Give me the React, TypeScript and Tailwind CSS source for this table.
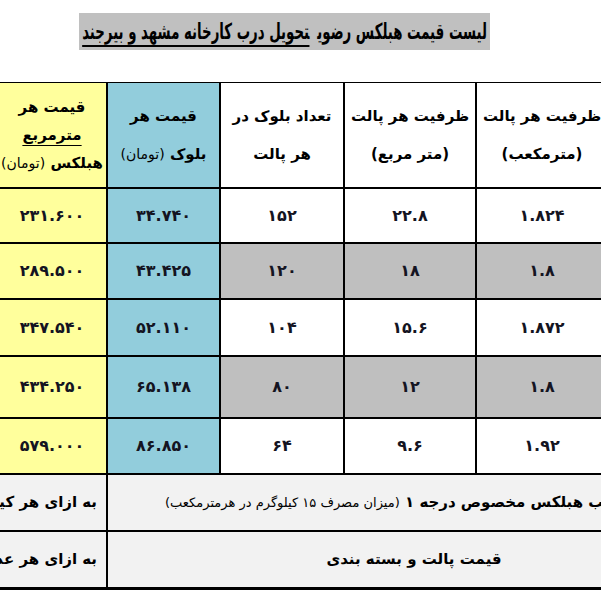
import React from "react";

const rows = [
  { a: "۲۳۱.۶۰۰", b: "۳۴.۷۴۰", c: "۱۵۲", d: "۲۲.۸", e: "۱.۸۲۴", gray: false, h: "h-[53px]" },
  { a: "۲۸۹.۵۰۰", b: "۴۳.۴۲۵", c: "۱۲۰", d: "۱۸", e: "۱.۸", gray: true, h: "h-[54px]" },
  { a: "۳۴۷.۵۴۰", b: "۵۲.۱۱۰", c: "۱۰۴", d: "۱۵.۶", e: "۱.۸۷۲", gray: false, h: "h-[55px]" },
  { a: "۴۳۴.۲۵۰", b: "۶۵.۱۳۸", c: "۸۰", d: "۱۲", e: "۱.۸", gray: true, h: "h-[60px]" },
  { a: "۵۷۹.۰۰۰", b: "۸۶.۸۵۰", c: "۶۴", d: "۹.۶", e: "۱.۹۲", gray: false, h: "h-[54px]" },
];

export default function App() {
  return (
    <div
      className="w-[601px] h-[601px] overflow-hidden bg-white text-black"
      style={{ fontFamily: '"DejaVu Sans", sans-serif' }}
    >
      <div className="pt-[13px] pl-[79px]">
        <div className="w-[411px] h-[37px] bg-[#c0c0c0] flex items-center justify-center overflow-hidden">
          <div
            dir="rtl"
            className="shrink-0 whitespace-nowrap text-[22px] font-bold leading-none scale-x-[0.605] origin-center"
          >
            <span>لیست قیمت هبلکس رضوی</span>
            <span className="mr-[13px] underline underline-offset-[6px] decoration-[1.5px]">
              تحویل درب کارخانه مشهد و بیرجند
            </span>
          </div>
        </div>
      </div>

      <div className="mt-[32px] -ml-[2px] w-[722px] bg-black flex flex-col gap-[2px] pt-[1px] pb-[3px]">
        {/* header */}
        <div className="flex gap-[2px] h-[104px] font-bold text-[15px]">
          <div dir="rtl" className="w-[108px] bg-[#ffff9c] flex flex-col items-center justify-center leading-[28px] whitespace-nowrap">
            <span>قیمت هر</span>
            <span className="underline underline-offset-[5px]">مترمربع</span>
            <span>
              هبلکس <span className="font-normal text-[14px]">(تومان)</span>
            </span>
          </div>
          <div dir="rtl" className="w-[111px] bg-[#92cddc] flex flex-col items-center justify-center leading-[38px] whitespace-nowrap">
            <span>قیمت هر</span>
            <span>
              بلوک <span className="font-normal text-[14px]">(تومان)</span>
            </span>
          </div>
          <div dir="rtl" className="w-[122px] bg-white flex flex-col items-center justify-center leading-[38px] whitespace-nowrap">
            <span>تعداد بلوک در</span>
            <span>هر پالت</span>
          </div>
          <div dir="rtl" className="w-[130px] bg-white flex flex-col items-center justify-center leading-[38px] whitespace-nowrap">
            <span>ظرفیت هر پالت</span>
            <span>(متر مربع)</span>
          </div>
          <div dir="rtl" className="w-[130px] bg-white flex flex-col items-center justify-center leading-[38px] whitespace-nowrap">
            <span>ظرفیت هر پالت</span>
            <span>(مترمکعب)</span>
          </div>
        </div>

        {rows.map((r, i) => (
          <div key={i} className={`flex gap-[2px] ${r.h} font-bold text-[16px] text-[#141422]`}>
            <div className="w-[108px] bg-[#ffff9c] flex items-center justify-center">{r.a}</div>
            <div className="w-[111px] bg-[#92cddc] flex items-center justify-center">{r.b}</div>
            <div className={`w-[122px] ${r.gray ? "bg-[#bfbfbf]" : "bg-white"} flex items-center justify-center`}>{r.c}</div>
            <div className={`w-[130px] ${r.gray ? "bg-[#bfbfbf]" : "bg-white"} flex items-center justify-center`}>{r.d}</div>
            <div className={`w-[130px] ${r.gray ? "bg-[#bfbfbf]" : "bg-white"} flex items-center justify-center`}>{r.e}</div>
          </div>
        ))}

        {/* footer */}
        <div className="flex gap-[2px] h-[55px] text-[15px] font-semibold">
          <div className="w-[108px] bg-[#f2f2f2] flex items-center justify-end pr-[9px] overflow-hidden whitespace-nowrap">
            <span dir="rtl">به ازای هر کیلوگرم</span>
          </div>
          <div className="w-[612px] bg-[#f2f2f2] flex items-center justify-start pl-[57px] whitespace-nowrap">
            <span dir="rtl">
              چسب هبلکس مخصوص درجه ۱ <span className="text-[13px] font-normal">(میزان مصرف ۱۵ کیلوگرم در هرمترمکعب)</span>
            </span>
          </div>
        </div>
        <div className="flex gap-[2px] h-[55px] text-[15px] font-semibold">
          <div className="w-[108px] bg-[#f2f2f2] flex items-center justify-end pr-[9px] overflow-hidden whitespace-nowrap">
            <span dir="rtl">به ازای هر عدد</span>
          </div>
          <div className="w-[612px] bg-[#f2f2f2] flex items-center justify-center whitespace-nowrap">
            <span dir="rtl">قیمت پالت و بسته بندی</span>
          </div>
        </div>
      </div>
    </div>
  );
}
